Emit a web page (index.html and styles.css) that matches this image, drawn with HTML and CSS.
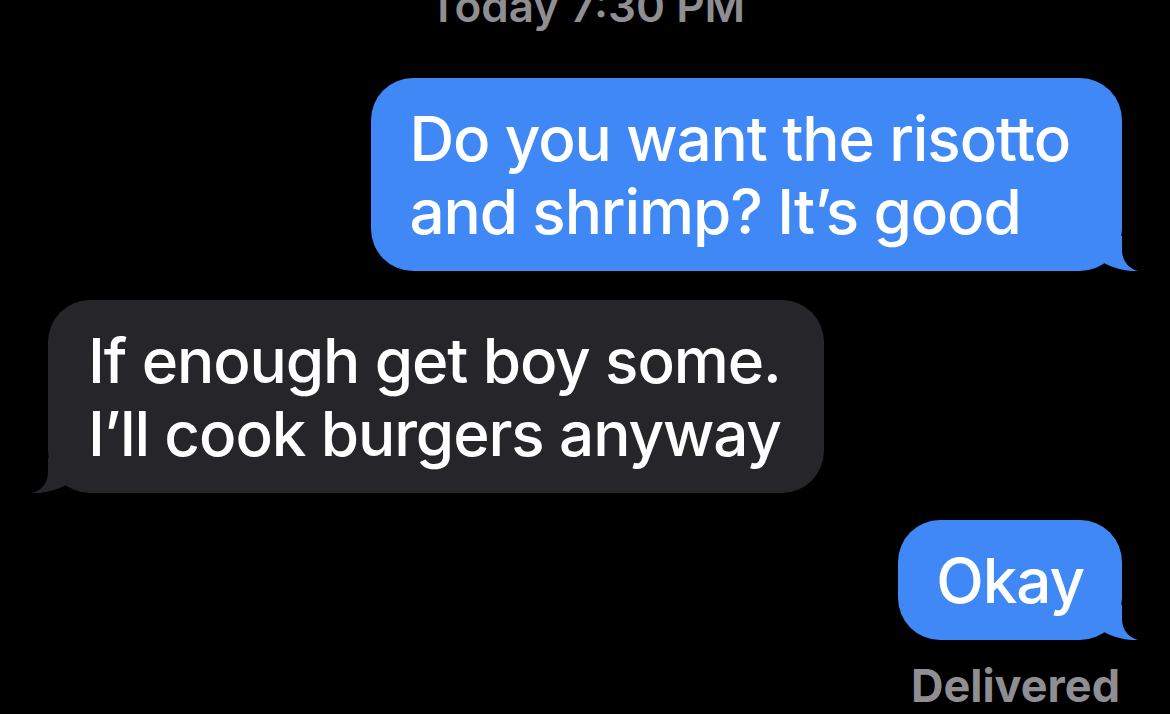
FILE: index.html
```html
<!DOCTYPE html>
<html lang="en">
<head>
    <meta charset="UTF-8">
    <meta name="viewport" content="width=device-width, initial-scale=1.0">
    <title>Messages</title>
    <link rel="stylesheet" href="styles.css">
</head>
<body>
    <div class="thread">
        <div class="timestamp">Today 7:30 PM</div>

        <div class="bubble sent multi">
            Do you want the risotto<br>and shrimp? It’s good
            <svg class="tail" viewBox="0 0 48 35"><path d="M30 0 L30 14 C30 26 38 33 46 35 C36 35.5 22 33 10 26 L0 20 L0 0 Z"/></svg>
        </div>

        <div class="bubble received multi">
            If enough get boy some.<br>I’ll cook burgers anyway
            <svg class="tail" viewBox="0 0 48 35"><path d="M30 0 L30 14 C30 26 38 33 46 35 C36 35.5 22 33 10 26 L0 20 L0 0 Z"/></svg>
        </div>

        <div class="bubble sent">
            Okay
            <svg class="tail" viewBox="0 0 48 35"><path d="M30 0 L30 14 C30 26 38 33 46 35 C36 35.5 22 33 10 26 L0 20 L0 0 Z"/></svg>
        </div>

        <div class="status">Delivered</div>
    </div>
</body>
</html>
```

FILE: styles.css
```css
body {
    margin: 0;
    background-color: #000;
    font-family: Inter, "Noto Sans", sans-serif;
    overflow: hidden;
}
.thread {
    display: flex;
    flex-direction: column;
    padding: 0 48px;
}
.timestamp {
    align-self: center;
    margin: -9px 0 57px 4px;
    color: #8e8e93;
    font-size: 44px;
    font-weight: 600;
    line-height: 30px;
}
.bubble {
    position: relative;
    width: fit-content;
    padding: 24px 38px 23px 38px;
    border-radius: 42px;
    color: #fff;
    font-size: 62px;
    font-weight: 500;
    letter-spacing: -1.1px;
    line-height: 73px;
    margin-bottom: 29px;
}
.bubble.multi {
    padding-right: 52px;
}
.sent {
    align-self: flex-end;
    background-color: #3f88f5;
}
.received {
    align-self: flex-start;
    background-color: #262529;
}
.bubble.received {
    padding-left: 40px;
    padding-right: 43px;
    margin-bottom: 27px;
}
.tail {
    position: absolute;
    bottom: 0;
    width: 48px;
    height: 35px;
}
.sent .tail {
    right: -18px;
    fill: #3f88f5;
}
.received .tail {
    left: -18px;
    transform: scaleX(-1);
    fill: #262529;
}
.status {
    align-self: flex-end;
    margin: -11px 2px 0 0;
    color: #8e8e93;
    font-size: 45px;
    font-weight: 700;
}
```
